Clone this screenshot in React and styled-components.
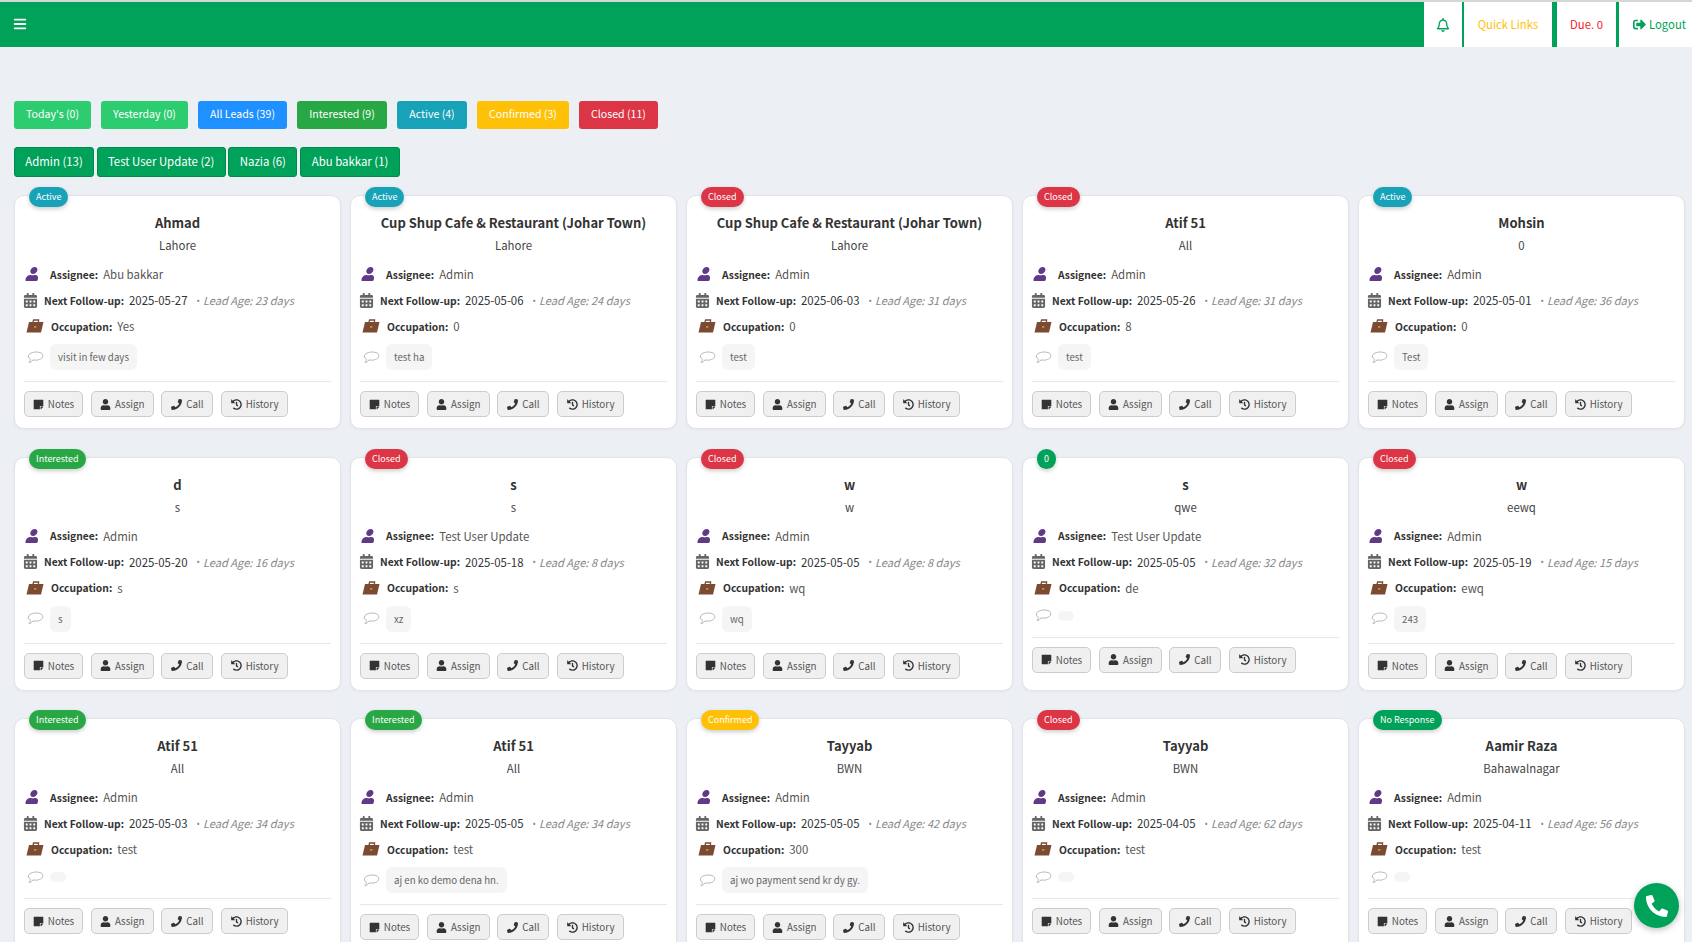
import React from 'react';
import styled, { createGlobalStyle } from 'styled-components';
import {
  FaBars, FaRegBell, FaSignOutAlt, FaUser, FaCalendarAlt, FaStickyNote, FaPhone, FaHistory,
} from 'react-icons/fa';

const GlobalStyle = createGlobalStyle`
  html, body {
    margin: 0;
    padding: 0;
    height: 100%;
    overflow: hidden;
    background: #ecf0f5;
    font-family: "Noto Sans CJK SC", "Noto Sans", sans-serif;
  }
  * { box-sizing: border-box; }
`;

const Header = styled.header`
  display: flex;
  align-items: stretch;
  height: 47px;
  border-top: 2px solid #d6d6d6;
  background: #00a159;
`;

const MenuButton = styled.div`
  display: flex;
  align-items: center;
  padding: 0 0 2px 13px;
  color: #fff;
  font-size: 14px;
  flex: 1;
`;

const HeaderItem = styled.div`
  display: flex;
  align-items: center;
  justify-content: center;
  gap: 3px;
  width: ${p => p.$width}px;
  margin-left: ${p => p.$gap || 0}px;
  padding-left: ${p => p.$shift || 0}px;
  background: #fff;
  color: ${p => p.$color};
  font-size: 11.3px;
  line-height: 1;
  svg { font-size: ${p => p.$iconSize || 13}px; }
`;

const Content = styled.main`
  padding: 54px 7px 0 14px;
`;

const FilterRow = styled.div`
  display: flex;
  gap: 10px;
  margin-bottom: 18px;
`;

const FilterButton = styled.div`
  display: flex;
  align-items: center;
  justify-content: center;
  width: ${p => p.$width}px;
  height: 28px;
  padding-bottom: 3px;
  border-radius: 3px;
  background: ${p => p.$bg};
  color: #fff;
  font-size: 10.6px;
`;

const UserRow = styled.div`
  display: flex;
  gap: 2.7px;
  margin-bottom: 18px;
`;

const UserButton = styled.div`
  display: flex;
  align-items: center;
  justify-content: center;
  width: ${p => p.$width}px;
  height: 30px;
  padding-bottom: 2px;
  border: 1px solid #008a4b;
  border-radius: 3px;
  background: #00a159;
  color: #fff;
  font-size: 11.4px;
`;

const CardGrid = styled.div`
  display: grid;
  grid-template-columns: repeat(5, 327px);
  column-gap: 9px;
  row-gap: 27.6px;
`;

const Card = styled.article`
  position: relative;
  height: 234px;
  padding: 17px 9px 0;
  border: 1px solid #e2e4e8;
  border-radius: 10px;
  background: #fff;
  box-shadow: 0 1px 3px rgba(0, 0, 0, 0.05);
`;

const Badge = styled.span`
  position: absolute;
  top: -9px;
  left: 14px;
  height: 20px;
  padding: 0 7px;
  border-radius: 10px;
  background: ${p => p.$bg};
  box-shadow: 0 2px 4px rgba(0, 0, 0, 0.2);
  color: #fff;
  font-size: 9px;
  line-height: 20px;
`;

const Name = styled.h3`
  margin: 0;
  color: #333;
  font-size: 13px;
  font-weight: 700;
  line-height: 20px;
  text-align: center;
`;

const City = styled.div`
  margin: 2px 0 9px;
  color: #444;
  font-size: 11.4px;
  line-height: 20px;
  text-align: center;
`;

const InfoRow = styled.div`
  display: flex;
  align-items: center;
  height: 20px;
  margin-bottom: 6px;
  font-size: 11.4px;
  white-space: nowrap;
`;

const IconSlot = styled.span`
  display: flex;
  align-items: center;
  flex: none;
  width: ${p => p.$width}px;
  margin-left: ${p => p.$left}px;
  color: ${p => p.$color};
  font-size: ${p => p.$size}px;
  svg { transform: ${p => p.$skew ? `skewX(${p.$skew}deg)` : 'none'}; }
`;

const Label = styled.span`
  margin-right: 5px;
  color: #333;
  font-size: 10.3px;
  font-weight: 700;
`;

const Value = styled.span`
  color: ${p => p.$dark ? '#333' : '#555'};
`;

const LeadAge = styled.span`
  display: flex;
  align-items: center;
  margin-left: 9px;
  color: #888;
  font-size: 11.1px;
  font-style: italic;
`;

const LeadDot = styled.span`
  margin-right: 3px;
  font-family: "Noto Sans", sans-serif;
  font-size: 9px;
  font-style: normal;
`;

const NoteRow = styled.div`
  display: flex;
  align-items: center;
  min-height: 20px;
  margin-top: 8px;
`;

const Note = styled.div`
  padding: 5px 8px;
  border-radius: 6px;
  background: #f5f5f5;
  color: #666;
  font-size: 9.7px;
  line-height: 16px;
`;

const Divider = styled.hr`
  height: 1px;
  margin: 11px 0 9px;
  border: 0;
  background: #e8e8e8;
`;

const Actions = styled.div`
  display: flex;
  gap: 7.7px;
`;

const ActionButton = styled.div`
  display: flex;
  align-items: center;
  justify-content: center;
  gap: 4px;
  width: ${p => p.$width}px;
  height: 26px;
  border: 1px solid #ccc;
  border-radius: 5px;
  background: #f0f0f0;
  color: #555;
  font-size: 9.8px;
  svg { color: #333; font-size: 11px; }
`;

const CallFab = styled.div`
  position: fixed;
  right: 13px;
  bottom: 14px;
  display: flex;
  align-items: center;
  justify-content: center;
  width: 45px;
  height: 45px;
  border-radius: 50%;
  background: #00a159;
  box-shadow: 0 2px 6px rgba(0, 0, 0, 0.25);
  color: #fff;
  font-size: 22px;
  svg { transform: scaleX(-1); }
`;

// slanted briefcase with the small clasp in the middle
const BriefcaseIcon = () => (
  <svg width="18" height="14" viewBox="0 0 18 14">
    <path d="M7 3 L7.6 1 H12.6 L12.4 3" fill="none" stroke="#7b4a32" strokeWidth="1.3" />
    <path d="M3 3 H17.5 L15 13.5 H0.5 Z" fill="#7b4a32" />
    <rect x="8" y="7" width="2.4" height="1.8" fill="#c98a3a" />
  </svg>
);

const CommentIcon = () => (
  <svg width="17" height="13" viewBox="0 0 17 13">
    <path
      d="M9.5 1 C13 1 16 2.5 15.8 5 C15.6 7.6 12 9.2 8.5 9.2 C7.6 9.2 6.8 9.1 6 8.9 C5 10.4 3.6 11.3 2 11.6 C3 10.6 3.4 9.6 3.5 8.4 C2 7.6 1.2 6.5 1.4 5 C1.8 2.6 5.5 1 9.5 1 Z"
      fill="none"
      stroke="#b8b8b8"
      strokeWidth="1"
    />
  </svg>
);

const filters = [
  ["Today's (0)", '#2ecc71', 77], ['Yesterday (0)', '#2ecc71', 87], ['All Leads (39)', '#1e90ff', 89],
  ['Interested (9)', '#28a745', 90], ['Active (4)', '#17a2b8', 70], ['Confirmed (3)', '#ffc107', 92],
  ['Closed (11)', '#dc3545', 79],
];

const users = [['Admin (13)', 80], ['Test User Update (2)', 129], ['Nazia (6)', 69], ['Abu bakkar (1)', 100]];

const statusColors = {
  Active: '#17a2b8', Closed: '#dc3545', Interested: '#28a745', Confirmed: '#ffc107',
  0: '#00a159', 'No Response': '#00a159',
};

const leads = [
  ['Active', 'Ahmad', 'Lahore', 'Abu bakkar', '2025-05-27', 23, 'Yes', 'visit in few days'],
  ['Active', 'Cup Shup Cafe & Restaurant (Johar Town)', 'Lahore', 'Admin', '2025-05-06', 24, '0', 'test ha'],
  ['Closed', 'Cup Shup Cafe & Restaurant (Johar Town)', 'Lahore', 'Admin', '2025-06-03', 31, '0', 'test'],
  ['Closed', 'Atif 51', 'All', 'Admin', '2025-05-26', 31, '8', 'test'],
  ['Active', 'Mohsin', '0', 'Admin', '2025-05-01', 36, '0', 'Test'],
  ['Interested', 'd', 's', 'Admin', '2025-05-20', 16, 's', 's'],
  ['Closed', 's', 's', 'Test User Update', '2025-05-18', 8, 's', 'xz'],
  ['Closed', 'w', 'w', 'Admin', '2025-05-05', 8, 'wq', 'wq'],
  ['0', 's', 'qwe', 'Test User Update', '2025-05-05', 32, 'de', ''],
  ['Closed', 'w', 'eewq', 'Admin', '2025-05-19', 15, 'ewq', '243'],
  ['Interested', 'Atif 51', 'All', 'Admin', '2025-05-03', 34, 'test', ''],
  ['Interested', 'Atif 51', 'All', 'Admin', '2025-05-05', 34, 'test', 'aj en ko demo dena hn.'],
  ['Confirmed', 'Tayyab', 'BWN', 'Admin', '2025-05-05', 42, '300', 'aj wo payment send kr dy gy.'],
  ['Closed', 'Tayyab', 'BWN', 'Admin', '2025-04-05', 62, 'test', ''],
  ['No Response', 'Aamir Raza', 'Bahawalnagar', 'Admin', '2025-04-11', 56, 'test', ''],
];

const LeadCard = ({ lead }) => {
  const [status, name, city, assignee, followUp, age, occupation, note] = lead;
  return (
    <Card>
      <Badge $bg={statusColors[status]}>{status}</Badge>
      <Name>{name}</Name>
      <City>{city}</City>
      <InfoRow>
        <IconSlot $left={2} $width={24} $color="#5f3a86" $size={14} $skew={-14}><FaUser /></IconSlot>
        <Label>Assignee:</Label>
        <Value>{assignee}</Value>
      </InfoRow>
      <InfoRow>
        <IconSlot $left={-1} $width={21} $color="#666" $size={15}><FaCalendarAlt /></IconSlot>
        <Label>Next Follow-up:</Label>
        <Value $dark>{followUp}</Value>
        <LeadAge><LeadDot>•</LeadDot>Lead Age: {age} days</LeadAge>
      </InfoRow>
      <InfoRow>
        <IconSlot $left={2} $width={25}><BriefcaseIcon /></IconSlot>
        <Label>Occupation:</Label>
        <Value>{occupation}</Value>
      </InfoRow>
      <NoteRow>
        <IconSlot $left={3} $width={23}><CommentIcon /></IconSlot>
        <Note>{note}</Note>
      </NoteRow>
      <Divider />
      <Actions>
        <ActionButton $width={59}><FaStickyNote />Notes</ActionButton>
        <ActionButton $width={63}><FaUser />Assign</ActionButton>
        <ActionButton $width={52}><FaPhone />Call</ActionButton>
        <ActionButton $width={67}><FaHistory />History</ActionButton>
      </Actions>
    </Card>
  );
};

export default function App() {
  return (
    <>
      <GlobalStyle />
      <Header>
        <MenuButton><FaBars /></MenuButton>
        <HeaderItem $width={38} $color="#00a159" $iconSize={14}><FaRegBell /></HeaderItem>
        <HeaderItem $width={88} $gap={2} $color="#ffc107">Quick Links</HeaderItem>
        <HeaderItem $width={59} $gap={5} $color="#f5222d">Due. 0</HeaderItem>
        <HeaderItem $width={73} $gap={3} $shift={8} $color="#00a159"><FaSignOutAlt />Logout</HeaderItem>
      </Header>
      <Content>
        <FilterRow>
          {filters.map(([text, bg, width]) => (
            <FilterButton key={text} $bg={bg} $width={width}>{text}</FilterButton>
          ))}
        </FilterRow>
        <UserRow>
          {users.map(([text, width]) => <UserButton key={text} $width={width}>{text}</UserButton>)}
        </UserRow>
        <CardGrid>
          {leads.map((lead, i) => <LeadCard key={i} lead={lead} />)}
        </CardGrid>
      </Content>
      <CallFab><FaPhone /></CallFab>
    </>
  );
}
